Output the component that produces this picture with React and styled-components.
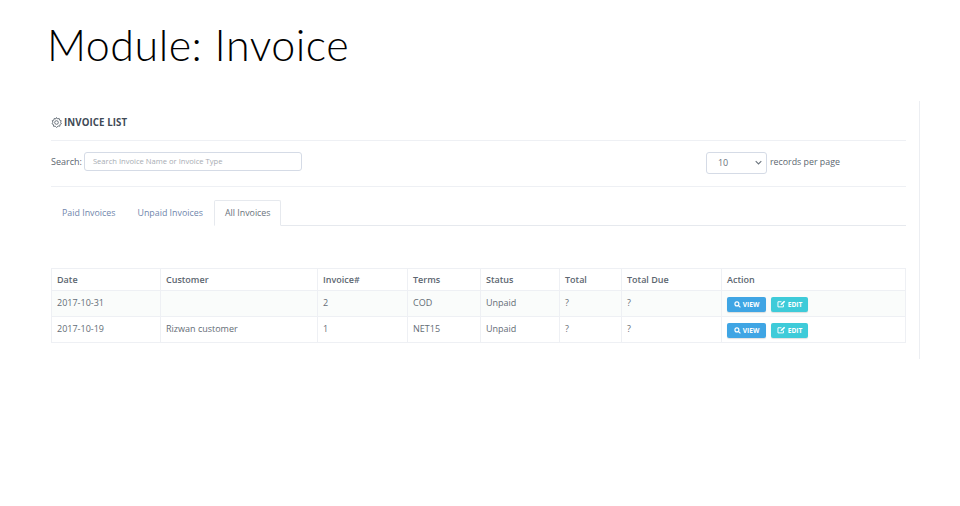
import React from "react";
import styled, { createGlobalStyle } from "styled-components";

const Global = createGlobalStyle`
  html, body { margin: 0; padding: 0; background: #fff; }
  body { font-family: "Open Sans", "Liberation Sans", sans-serif; }
`;
const Page = styled.div`
  width: 960px; height: 506px; overflow: hidden; box-sizing: border-box;
  padding: 16px 0 0 51px;
`;
const Title = styled.h1`
  margin: 0 0 0 -4px; height: 85px;
  font-family: "Lato", "Open Sans", sans-serif; font-weight: 300; font-size: 43px; line-height: 58px;
  color: #000; letter-spacing: 0.5px;
`;
const Panel = styled.section`
  box-sizing: border-box; width: 869px; height: 258px; padding-right: 13px;
  border-right: 1px solid #eceef2;
`;
const PanelHead = styled.div`
  display: flex; align-items: center; gap: 2px; height: 40px; box-sizing: border-box; padding-top: 3px;
  border-bottom: 1px solid #eef0f4;
  font-size: 9.7px; font-weight: 700; color: #3f4a56; letter-spacing: .1px;
`;
const Filters = styled.div`
  display: flex; align-items: center; height: 46px; box-sizing: border-box; padding-bottom: 5px;
  border-bottom: 1px solid #eef0f4;
  font-size: 9px; color: #5c6670;
`;
const Label = styled.label` margin-right: 2px; `;
const SearchBox = styled.div`
  box-sizing: border-box; width: 218px; height: 19px; padding-left: 8px;
  border: 1px solid #d5dbe6; border-radius: 3px; display: flex; align-items: center;
  font-size: 7.6px; color: #a7acb3;
`;
const Pager = styled.div`
  display: flex; align-items: center; gap: 3px; margin-left: 404px; font-size: 8.85px;
  padding-top: 3px;
`;
const PagerText = styled.span` padding-bottom: 2px; `;
const SelectBox = styled.div`
  box-sizing: border-box; width: 61px; height: 22px; padding: 0 4px 0 11px;
  border: 1px solid #d5dbe6; border-radius: 3px; display: flex; align-items: center;
  justify-content: space-between; font-size: 9px; color: #6a737c;
`;
const Tabs = styled.nav`
  display: flex; align-items: flex-end; height: 38px; border-bottom: 1px solid #e6e9ee;
`;
const Tab = styled.a`
  box-sizing: border-box; height: 26px; padding: 0 ${p => p.$active ? "9px" : "10px"} 1px 10px;
  display: flex; align-items: center; font-size: 8.85px;
  color: ${p => p.$active ? "#6a737c" : "#6f86ac"};
  background: #fff; margin-bottom: -1px;
  border: 1px solid ${p => p.$active ? "#e6e9ee" : "transparent"};
  border-bottom-color: ${p => p.$active ? "#fff" : "transparent"};
  border-radius: 2px 2px 0 0;
`;
const Table = styled.table`
  width: 854px; margin-top: 42px; border-collapse: collapse; table-layout: fixed;
  font-size: 9px; color: #646d76;
`;
const Th = styled.th`
  box-sizing: border-box; height: 22px; padding: 0 5px 1px; border: 1px solid #eef0f4; text-align: left;
  font-weight: 600; color: #5c6670; background: #fff;
`;
const Td = styled.td`
  box-sizing: border-box; height: 26px; padding: ${p => p.$action ? "1px 5px 0" : "0 5px 3px"};
  border: 1px solid #eef0f4;
  vertical-align: middle; overflow: hidden; white-space: nowrap;
`;
const Row = styled.tr` background: ${p => p.$odd ? "#fafcfb" : "#fff"}; `;
const Actions = styled.div` display: flex; gap: 5px; `;
const Btn = styled.button`
  box-sizing: border-box; height: 15px; width: ${p => p.$w}px; padding: 0; border: 0; border-radius: 2px;
  background: ${p => p.$bg}; color: #fff; font: 700 6.6px "Open Sans", sans-serif;
  display: inline-flex; align-items: center; justify-content: center; gap: 2px;
  box-shadow: 0 1px 1px rgba(0,0,0,.12);
`;

const Gear = () => (
  <svg width="11" height="11" viewBox="2.500 1.500 19 21" fill="none" stroke="#4b5560" strokeWidth="1.500">
    <circle cx="12" cy="12" r="3.500" />
    <path d="M12 2.500l2 2.600 3.200-.8.700 3.200 3.100 1-1.200 3 1.700 2.700-2.900 1.500-.1 3.300-3.300-.2L12 21.500l-2.300-2.400-3.300.2-.1-3.300-2.900-1.500L5.100 11.500l-1.200-3 3.100-1 .7-3.200 3.200.8z" />
  </svg>
);
const Chevron = () => (
  <svg width="7" height="5" viewBox="0 0 10 6" fill="none" stroke="#6a737c" strokeWidth="1.500"><path d="M1 1l4 4 4-4" /></svg>
);
const Search = () => (
  <svg width="7" height="7" viewBox="0 0 12 12" fill="none" stroke="#fff" strokeWidth="2"><circle cx="5" cy="5" r="3.400" /><path d="M7.500 7.500L11 11" /></svg>
);
const Edit = () => (
  <svg width="9" height="8" viewBox="0 0 14 12" fill="none" stroke="#fff" strokeWidth="1.500"><path d="M10 7v3.500H1.500V2.500H7" /><path d="M5.500 7.500l.5-2L11 .8l1.800 1.800L8 7z" fill="#fff" stroke="none" /></svg>
);

const cols = [109, 157, 90, 73, 79, 62, 100, 184];
const headers = ["Date", "Customer", "Invoice#", "Terms", "Status", "Total", "Total Due", "Action"];
const rows = [
  ["2017-10-31", "", "2", "COD", "Unpaid", "?", "?"],
  ["2017-10-19", "Rizwan customer", "1", "NET15", "Unpaid", "?", "?"],
];

export default function App() {
  return (
    <Page>
      <Global />
      <Title>Module: Invoice</Title>
      <Panel>
        <PanelHead><Gear />INVOICE LIST</PanelHead>
        <Filters>
          <Label>Search:</Label>
          <SearchBox>Search Invoice Name or Invoice Type</SearchBox>
          <Pager>
            <SelectBox>10<Chevron /></SelectBox>
            <PagerText>records per page</PagerText>
          </Pager>
        </Filters>
        <Tabs>
          <Tab>Paid Invoices</Tab>
          <Tab>Unpaid Invoices</Tab>
          <Tab $active>All Invoices</Tab>
        </Tabs>
        <Table>
          <colgroup>{cols.map((w, i) => <col key={i} style={{ width: w }} />)}</colgroup>
          <thead><tr>{headers.map(h => <Th key={h}>{h}</Th>)}</tr></thead>
          <tbody>
            {rows.map((r, i) => (
              <Row key={i} $odd={i === 0}>
                {r.map((c, j) => <Td key={j}>{c}</Td>)}
                <Td $action>
                  <Actions>
                    <Btn $w={39} $bg="#3fa5e4"><Search />VIEW</Btn>
                    <Btn $w={37} $bg="#3ecbd9"><Edit />EDIT</Btn>
                  </Actions>
                </Td>
              </Row>
            ))}
          </tbody>
        </Table>
      </Panel>
    </Page>
  );
}
